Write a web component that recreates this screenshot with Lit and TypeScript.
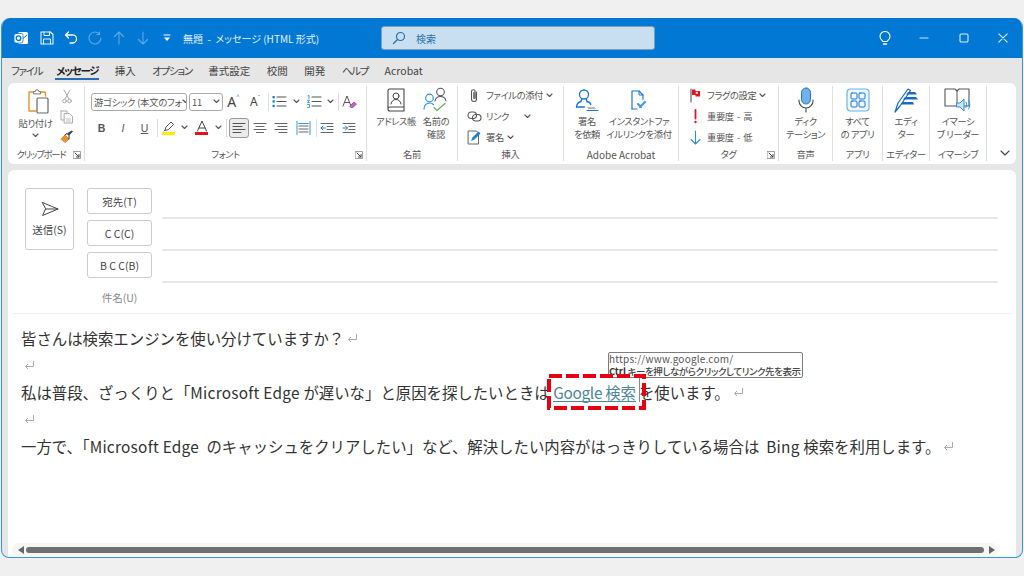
import { LitElement, html, css, svg } from "lit";
import { customElement } from "lit/decorators.js";

const S = (w: number, h: number, body: unknown, vb?: string) => html`<svg width=${w} height=${h} viewBox=${vb ?? `0 0 ${w} ${h}`} fill="none" stroke-linecap="round" stroke-linejoin="round">${body}</svg>`;
const chev = (c = "#555") => S(7, 5, svg`<path d="M1 1l2.5 2.5L6 1" stroke=${c} stroke-width="1.1"/>`);
const launcher = () => S(8, 8, svg`<path d="M.5 .5h7v7h-7z" stroke="#888" stroke-width=".8"/><path d="M2 2l4 4M6 3.5V6H3.5" stroke="#444" stroke-width="1"/>`);
const ret = () => html`<svg class="ret" width="11" height="11" viewBox="0 0 11 11" fill="none"><path d="M9.5 1v5.5H1.5M4 4L1.5 6.5 4 9" stroke="#aaa" stroke-width="1"/></svg>`;

const ic = {
  outlook: S(16, 16, svg`<rect x="5" y="2" width="10" height="12" rx="1.5" fill="#fff"/><path d="M7 5l3.5 3L14 5" stroke="#0078d4"/><rect x="1" y="3.5" width="9" height="9.5" rx="2" fill="#fff" stroke="#0078d4" stroke-width=".8"/><circle cx="5.5" cy="8.2" r="2.3" stroke="#0078d4" stroke-width="1.3"/>`),
  save: S(14, 14, svg`<path d="M1 1h9.5L13 3.5V13H1z" stroke="#e8f2fb" stroke-width="1.1"/><path d="M4 1v3.5h5.5V1M3.5 13V8h7v5" stroke="#e8f2fb"/>`),
  undo: S(14, 14, svg`<path d="M4.5 1L1.5 4l3 3M1.5 4h6.5a4 4 0 0 1 1 8H6" stroke="#fff" stroke-width="1.3"/>`),
  redo: S(14, 14, svg`<path d="M11.5 3A6 6 0 1 0 13 7M11.5 .8V3.5H8.8" stroke="#5fa8e2" stroke-width="1.1"/>`),
  up: S(12, 14, svg`<path d="M6 13V1M1.5 5.5L6 1l4.5 4.5" stroke="#5fa8e2" stroke-width="1.1"/>`),
  down: S(12, 14, svg`<path d="M6 1v12M1.5 8.5L6 13l4.5-4.5" stroke="#5fa8e2" stroke-width="1.1"/>`),
  qat: S(8, 8, svg`<path d="M1 1h6" stroke="#fff"/><path d="M1 3.5h6L4 7z" fill="#fff"/>`),
  search: S(14, 14, svg`<circle cx="8.5" cy="5.5" r="4" stroke="#2b6ea8" stroke-width="1.2"/><path d="M5.5 8.5L1.5 12.5" stroke="#2b6ea8" stroke-width="1.3"/>`),
  bulb: S(12, 15, svg`<path d="M4 10.5C2.5 9.3 1 8 1 5.5a5 5 0 0 1 10 0c0 2.5-1.5 3.8-3 5z" stroke="#fff" stroke-width="1.1"/><path d="M4.5 13h3" stroke="#fff" stroke-width="1.3"/>`),
  min: S(10, 10, svg`<path d="M1 5h8" stroke="#cfe4f7" stroke-width="1.2"/>`),
  max: S(10, 10, svg`<rect x="1" y="1" width="8" height="8" rx="1.3" stroke="#dcecf9" stroke-width="1.1"/>`),
  close: S(10, 10, svg`<path d="M.8 .8l8.4 8.4M9.2 .8L.8 9.2" stroke="#dcecf9" stroke-width="1.1"/>`),
  paste: S(24, 26, svg`<path d="M3.5 4h4M14 4h4.5a1 1 0 0 1 1 1v3M3 4v19h7" stroke="#e8922e" stroke-width="1.4"/><path d="M7.5 5.5V3.5h1.7a1.8 1.8 0 0 1 3.6 0h1.7v2z" stroke="#777" fill="#fff"/><rect x="11" y="10" width="11" height="15" rx="1" fill="#fff" stroke="#666" stroke-width="1.2"/>`),
  scissors: S(10, 15, svg`<path d="M2 1l5 9M8 1L3 10" stroke="#aaa"/><circle cx="2.5" cy="12" r="1.8" stroke="#aaa"/><circle cx="7.5" cy="12" r="1.8" stroke="#aaa"/>`),
  copy: S(14, 14, svg`<path d="M1 1h6v2M1 1v9h3" stroke="#aaa"/><path d="M4.5 3.5h5l3 3v6.5h-8z" stroke="#aaa"/><path d="M6.5 9h4M6.5 11h4" stroke="#bbb"/>`),
  painter: S(14, 13, svg`<path d="M1 9l4-4 4 4-3.5 3.5z" fill="#e8922e" stroke="#d47a1c" stroke-width=".7"/><path d="M7 3.5l2 2 4-4-1.5-1z" fill="#444"/><path d="M5 5l2-1.5 2 2L9 9" stroke="#333"/>`),
  bullets: S(15, 13, svg`<path d="M5 2h9M5 6.500h9M5 11h9" stroke="#555" stroke-width="1.1"/><rect x=".5" y="1" width="2.300" height="2.300" fill="#1d7fd1"/><rect x=".5" y="5.300" width="2.300" height="2.300" fill="#1d7fd1"/><rect x=".5" y="9.800" width="2.300" height="2.300" fill="#1d7fd1"/>`),
  numbered: S(15, 13, svg`<path d="M5 2h9M5 6.500h9M5 11h9" stroke="#555" stroke-width="1.1"/><path d="M1 .8l1-.3v3M.5 5.200h2l-2 2.500h2M.5 9.500h2v3h-2" stroke="#1d7fd1" stroke-width=".8"/>`),
  clear: S(15, 15, svg`<path d="M1 12L5 2l4 10M2.500 8.500h5" stroke="#555" stroke-width="1"/><path d="M8 12l4-4 2.500 2-3.500 3.500H9z" fill="#b768c9" stroke="#96309e" stroke-width=".7"/>`),
  hl: S(14, 15, svg`<path d="M3 10l1-3 5-5 2.500 2.500-5 5z" stroke="#555"/><path d="M3 10l-1 1" stroke="#555"/><rect y="12" width="13" height="3" fill="#ffef00"/>`),
  colorA: S(14, 15, svg`<path d="M2.500 11L7 1l4.500 10M4 8h6" stroke="#444" stroke-width="1"/><rect y="12" width="13" height="3" fill="#e8111c"/>`),
  left: S(14, 12, svg`<path d="M1 1.500h12M1 4.500h9M1 7.500h12M1 10.500h8" stroke="#555" stroke-width="1.1"/>`),
  center: S(14, 12, svg`<path d="M1 1.500h12M3 4.500h8M1 7.500h12M3.500 10.500h7" stroke="#666" stroke-width="1.1"/>`),
  right: S(14, 12, svg`<path d="M1 1.500h12M4 4.500h9M1 7.500h12M5 10.500h8" stroke="#666" stroke-width="1.1"/>`),
  justify: S(15, 14, svg`<path d="M3 5h9M3 8h9M3 11h9M3 2.500h9" stroke="#666" stroke-width="1.1"/><path d="M1 0v14M14 0v14" stroke="#69aee6" stroke-width="1.3"/><path d="M3 2.500h9" stroke="#3a90d8"/>`),
  outdent: S(14, 12, svg`<path d="M1 1.500h12M7 4.500h6M7 7.500h6M1 10.500h12" stroke="#666" stroke-width="1.1"/><path d="M5.500 6H1M3 4L1 6l2 2" stroke="#1d7fd1"/>`),
  indent: S(14, 12, svg`<path d="M1 1.500h12M7 4.500h6M7 7.500h6M1 10.500h12" stroke="#666" stroke-width="1.1"/><path d="M1 6h4.500M3.500 4l2 2-2 2" stroke="#1d7fd1"/>`),
  book: S(20, 24, svg`<path d="M2 21V2.500A1.500 1.500 0 0 1 3.500 1H18v22H4a2 2 0 0 1-2-2zm0 0a2 2 0 0 1 2-2h14" stroke="#444" stroke-width="1.1"/><circle cx="10" cy="8" r="3" stroke="#444"/><path d="M5 16c.5-3 2.500-4.500 5-4.500s4.500 1.500 5 4.500" stroke="#444"/>`),
  check: S(26, 26, svg`<circle cx="17.500" cy="5" r="3.800" stroke="#555" stroke-width="1.1"/><path d="M12 14c.5-2.500 2.500-4.500 5.500-4.500s5 2 5.500 4.500" stroke="#555" stroke-width="1.1"/><circle cx="6.500" cy="11" r="3.800" stroke="#2a8fe0" stroke-width="1.2"/><path d="M1 22c0-3.500 2.500-6 5.500-6 1.500 0 3 .5 4 1.500" stroke="#2a8fe0" stroke-width="1.2"/><path d="M11 20.500l3 3 8-7" stroke="#5cb85c" stroke-width="1.2"/>`),
  clip: S(10, 15, svg`<path d="M7.500 4v7a2.500 2.500 0 0 1-5 0V3.500a1.800 1.800 0 0 1 3.600 0V10a.7.7 0 0 1-1.300 0V4.500" stroke="#555" stroke-width="1.1"/>`),
  link: S(15, 11, svg`<rect x="1" y="1" width="8.500" height="6.500" rx="3.200" stroke="#555" stroke-width="1.100"/><rect x="5.500" y="3.500" width="8.500" height="6.500" rx="3.200" stroke="#555" stroke-width="1.100"/>`),
  sign: S(15, 15, svg`<path d="M1.500 1h8l2 2v11h-10z" stroke="#666" stroke-width="1"/><path d="M4 11l1.500-3.500 6-6 2 2-6 6z" fill="#1d7fd1"/>`),
  signreq: S(24, 24, svg`<circle cx="9" cy="6.500" r="4.500" stroke="#1a78d0" stroke-width="1.300"/><path d="M1.500 19c.3-3.500 2.500-5 4.500-5.500l.5-2M11.500 11.500l.5 2c2 .5 3.500 1.500 3.800 3" stroke="#1a78d0" stroke-width="1.300"/><path d="M1.500 19h8" stroke="#1a78d0" stroke-width="1.300"/><path d="M12 22.500h11" stroke="#1a78d0" stroke-width="1"/><path d="M13 19.500l1 1 1-1 1 1 1-1 1 1 1-1 1 1" stroke="#333" stroke-width=".8"/>`),
  instant: S(20, 22, svg`<path d="M3 20V2h7l4 4v3" stroke="#1a78d0" stroke-width="1.200"/><path d="M10 2v4h4" stroke="#1a78d0"/><path d="M3 20h5" stroke="#1a78d0" stroke-width="1.200"/><path d="M9 15l3 3M11 18l5-5" stroke="#3e9ae8" stroke-width="2.200"/><circle cx="14" cy="10" r=".8" fill="#1a78d0"/>`),
  flag: S(11, 15, svg`<path d="M1 1v13" stroke="#555" stroke-width="1.100"/><path d="M2 1.500h3.500v1.500H10v5.500H5.500V7H2z" fill="#e8111c"/><rect x="5.800" y="3.800" width="2" height="2" fill="#fff"/>`),
  bang: S(5, 15, svg`<path d="M2.500 1v8.500" stroke="#e8111c" stroke-width="1.800"/><circle cx="2.500" cy="13" r="1.200" fill="#e8111c"/>`),
  lowdown: S(11, 15, svg`<path d="M5.500 1v13M1 9.500L5.500 14 10 9.500" stroke="#2a8fe0" stroke-width="1.100"/>`),
  mic: S(16, 26, svg`<rect x="3.500" y="1" width="9" height="16" rx="4.500" fill="#74b0e8" stroke="#1a78d0" stroke-width="1"/><path d="M1 13v1a7 7 0 0 0 14 0v-1M8 21v4" stroke="#444" stroke-width="1.100"/>`),
  apps: S(24, 24, svg`<rect x="1" y="1" width="22" height="22" rx="3.500" fill="#eef7fd" stroke="#6cb4e8" stroke-width="1.200"/><rect x="5" y="5" width="6" height="6" rx="1" stroke="#1a78d0"/><rect x="13" y="5" width="6" height="6" rx="1" stroke="#1a78d0"/><rect x="5" y="13" width="6" height="6" rx="1" stroke="#1a78d0"/><rect x="13" y="13" width="6" height="6" rx="1" stroke="#1a78d0"/>`),
  editor: S(26, 26, svg`<path d="M2 25l3-9L15 2l2.500 1.500L7 19z" fill="#fff" stroke="#1a68c8" stroke-width="1.200"/><path d="M15 5h7l2 2.500h-11zM12 10h11l2 2.500H10zM9 15h11l1 2.500H8z" fill="#1a68c8"/>`),
  immersive: S(28, 26, svg`<path d="M1 2h10l2 2 2-2h10v17H1z" stroke="#555" stroke-width="1.100"/><path d="M13 4v15" stroke="#555"/><path d="M13 16h3l4-4v12l-4-4h-3z" fill="#cfe6f8" stroke="#2a8fe0"/><path d="M22 15c1 1.500 1 4 0 5.500M24.500 13.500c1.800 2.500 1.800 6 0 8.500" stroke="#2a8fe0"/>`),
  send: S(18, 16, svg`<path d="M1.500 1.500L17 8 1.500 14.500 4.500 8zM4.500 8H17" stroke="#444" stroke-width="1"/>`),
};

@customElement("app-root")
export class AppRoot extends LitElement {
  static styles = css`
    :host { display: block; position: relative; width: 1024px; height: 576px; overflow: hidden; background: #f0f0f0; box-sizing: border-box; padding: 18px 0 18px 0; color: #333;
      font-family: "Noto Sans CJK JP", "Noto Sans", sans-serif; font-feature-settings: "palt"; }
    svg { display: block; flex: none; }
    .win { height: 540px; margin: 0 1px; box-sizing: border-box; background: #e6e6e6; border: 1.5px solid #3a96dd; border-top: 0; border-radius: 9px 9px 8px 8px; display: flex; flex-direction: column; overflow: hidden; }
    .title { height: 40px; background: #0078d4; margin: 0 -1px; display: flex; align-items: center; flex: none; position: relative; color: #e4f0fa; }
    .qat { display: flex; align-items: center; margin-left: 12px; }
    .qat > * { flex: none; }
    .qat .c { width: 24px; display: flex; justify-content: center; }
    .qat .lg { width: 16px; margin-right: 6px; }
    .ttl { font-size: 10px; margin-left: 4px; width: 198px; white-space: pre; }
    .sbox { width: 274px; height: 24px; box-sizing: border-box; background: #c8dff2; border: 1px solid #7f9fb8; border-radius: 3px; display: flex; align-items: center; gap: 10px; padding-left: 10px; font-size: 10px; color: #2b6ea8; }
    .wbtns { margin-left: auto; display: flex; align-items: center; }
    .wbtns .c { width: 39.500px; display: flex; justify-content: center; }
    .tabs { height: 25px; flex: none; display: flex; align-items: center; gap: 16.500px; padding-left: 9px; font-size: 10.500px; color: #444; }
    .tab { position: relative; white-space: nowrap; }
    .tab:first-child { margin-right: -2.500px; }
    .tab.k { letter-spacing: -1.300px; }
    .tab.on { font-weight: 700; color: #222; }
    .tab.on::after { content: ""; position: absolute; left: -1px; right: -1px; bottom: -2px; height: 2px; background: #2a6db0; }
    .ribbon { height: 81px; flex: none; margin: 0 6px; background: #fff; border-radius: 6px; display: flex; font-size: 9.300px; letter-spacing: -.4px; color: #555; box-sizing: border-box; padding: 3px 0 3px; position: relative; }
    .g { display: flex; flex-direction: column; border-right: 1px solid #dedede; box-sizing: border-box; flex: none; position: relative; }
    .g .body { flex: 1; display: flex; min-height: 0; }
    .lab { height: 13px; line-height: 13px; font-size: 9.300px; text-align: center; color: #555; white-space: nowrap; flex: none; }
    .lab.en { font-size: 10px; letter-spacing: 0; }
    .lab.clipl { padding-right: 10px; letter-spacing: -1.200px; }
    .launch { position: absolute; right: 3px; bottom: 2px; }
    .big { display: flex; flex-direction: column; align-items: center; flex: 1; line-height: 13px; text-align: center; white-space: nowrap; padding-top: 1.500px; min-width: 0; }
    .big .i { height: 25px; display: flex; align-items: center; justify-content: center; margin-bottom: 2px; }
    .big.paste { flex: none; width: 45px; margin-left: 5px; padding-top: 2px; }
    .big.paste .i { height: 26px; padding-left: 4px; margin-bottom: 3px; }
    .big.paste .dn { margin-top: 3px; }
    .big.w40 { flex: none; width: 40px; }
    .big.w46 { flex: none; width: 46px; }
    .big.w58 { flex: none; width: 58px; }
    .pl9 { width: 9px; flex: none; }
    .cb { width: 18px; display: flex; flex-direction: column; align-items: center; gap: 6px; padding-top: 3px; }
    .rows3 { display: flex; flex-direction: column; margin-top: -1.500px; padding-left: 7px; flex: 1; }
    .r { height: 21px; display: flex; align-items: center; white-space: pre; flex: none; }
    .r .i { width: 18px; display: flex; justify-content: center; margin-right: 3px; }
    .r .ch { margin-left: 3px; }
    .r .ch.far { margin-left: 15px; }
    .fontwrap { flex: 1; display: flex; flex-direction: column; padding: 5.500px 0 0 6px; letter-spacing: 0; }
    .fr { display: flex; align-items: center; height: 22px; flex: none; }
    .fr.a1 { height: 20px; }
    .fr.a2 { margin-top: 5px; }
    .fr .c { display: flex; justify-content: center; align-items: center; flex: none; }
    .combo { height: 18px; box-sizing: border-box; border: 1px solid #aaa; border-radius: 3px; display: flex; align-items: center; justify-content: space-between; padding: 0 2px; font-size: 9.300px; letter-spacing: -.2px; color: #555; white-space: nowrap; overflow: hidden; flex: none; margin-right: 2px; }
    .combo.f { width: 96px; }
    .combo.s { width: 34px; }
    .vs { width: 1px; height: 18px; background: #ddd; flex: none; }
    .act { width: 20px; height: 20px; box-sizing: border-box; background: #ebebeb; border: 1px solid #9a9a9a; border-radius: 3px; display: flex; align-items: center; justify-content: center; flex: none; margin-left: 2px; }
    .bi { font-family: "Liberation Sans", sans-serif; font-size: 10.500px; color: #555; }
    .growA { font-family: "Noto Sans", sans-serif; color: #444; display: flex; align-items: flex-start; font-size: 14px; }
    .growA.sm { font-size: 12px; }
    .growA i { font-style: normal; font-size: 6px; color: #1d7fd1; line-height: 8px; }
    .expand { position: absolute; right: 6px; bottom: 8px; }
    .compose { flex: 1; min-height: 0; margin: 6px 6px 0; background: #fff; border-radius: 6px 6px 0 0; display: flex; flex-direction: column; }
    .head { display: flex; padding: 18px 18px 0 17px; height: 143px; box-sizing: border-box; flex: none; }
    .send { width: 49px; height: 62px; box-sizing: border-box; border: 1px solid #ccc; border-radius: 3px; display: flex; flex-direction: column; align-items: center; gap: 5px; padding-top: 12px; font-size: 10.500px; color: #444; margin-right: 13px; flex: none; }
    .hbtns { display: flex; flex-direction: column; gap: 6px; width: 65px; margin-right: 10px; flex: none; }
    .hb { height: 26px; flex: none; box-sizing: border-box; border: 1px solid #ccc; border-radius: 3px; display: flex; align-items: center; justify-content: center; font-size: 10.500px; color: #444; white-space: pre; }
    .sub { height: 26px; flex: none; display: flex; align-items: center; justify-content: center; font-size: 10.500px; color: #888; }
    .lines { flex: 1; display: flex; flex-direction: column; }
    .ln { height: 32px; box-sizing: border-box; border-bottom: 2px solid #e8e8e8; flex: none; }
    .ln:first-child { height: 31px; }
    .text { margin: 0 4px; border-top: 1px solid #f0f0f0; padding: 11px 0 0 9px; font-size: 15.400px; line-height: 27px; color: #333; font-feature-settings: normal; flex: 1; min-height: 0; }
    .text div { height: 27px; white-space: nowrap; display: flex; align-items: center; }
    .text span { white-space: pre; }
    .text .lat { letter-spacing: .25px; }
    .ret { margin-left: 3px; flex: none; }
    .ret.tight { margin-left: -5px; }
    .a { color: #4d8799; border-bottom: 1px solid #4d8799; line-height: 18px; letter-spacing: -.3px; }
    .sb { height: 13px; margin: 0 18px 1px 4px; background: #f6f6f6; border-radius: 6px; display: flex; align-items: center; flex: none; padding: 0 3px 0 3px; gap: 5px; }
    .thumb { flex: 1; height: 6px; background: #707070; border-radius: 3px; }
    .tri-l { width: 0; height: 0; border: 4px solid transparent; border-right: 6px solid #666; border-left: 0; margin-left: 3px; margin-right: -3px; }
    .tri-r { width: 0; height: 0; border: 4px solid transparent; border-left: 6px solid #666; border-right: 0; }
    .tip { position: absolute; left: 608px; top: 352px; width: 195px; height: 26px; box-sizing: border-box; border: 1px solid #7d7d7d; border-radius: 2px; background: #fff; line-height: 12px; color: #555; white-space: nowrap; overflow: hidden; }
    .tip .u { font-size: 10px; letter-spacing: .2px; display: block; }
    .tip .h { font-size: 9.500px; letter-spacing: -.45px; display: block; font-weight: 500; color: #444; }
    .tip b { color: #333; letter-spacing: 0; }
    .red { position: absolute; left: 547px; top: 374px; }
    .caret { position: absolute; left: 639px; top: 378px; width: 1px; height: 24px; background: #888; }
  `;

  big(icon: unknown, text: string, cls = "") {
    return html`<div class="big ${cls}"><div class="i">${icon}</div>${text.split("\n").map((t) => html`<div>${t}</div>`)}</div>`;
  }

  cell(w: number, c: unknown) {
    return html`<div class="c" style="width:${w}px">${c}</div>`;
  }

  group(w: number, body: unknown, label: string, launch = false, labCls = "") {
    return html`<div class="g" style="width:${w}px"><div class="body">${body}</div><div class="lab ${labCls}">${label}</div>${launch ? html`<div class="launch">${launcher()}</div>` : ""}</div>`;
  }

  render() {
    const c = this.cell;
    const kana = new Set(["ファイル", "メッセージ", "オプション", "ヘルプ"]);
    return html`
      <div class="win">
        <div class="title">
          <div class="qat">
            <div class="c lg">${ic.outlook}</div>
            <div class="c">${ic.save}</div>
            <div class="c">${ic.undo}</div>
            <div class="c">${ic.redo}</div>
            <div class="c">${ic.up}</div>
            <div class="c">${ic.down}</div>
            <div class="c">${ic.qat}</div>
            <div class="ttl">無題  -  メッセージ (HTML 形式)</div>
          </div>
          <div class="sbox">${ic.search}<span>検索</span></div>
          <div class="wbtns">
            <div class="c">${ic.bulb}</div><div class="c">${ic.min}</div><div class="c">${ic.max}</div><div class="c">${ic.close}</div>
          </div>
        </div>
        <div class="tabs">
          ${["ファイル", "メッセージ", "挿入", "オプション", "書式設定", "校閲", "開発", "ヘルプ", "Acrobat"].map((t, i) => html`<div class="tab ${i === 1 ? "on" : ""} ${kana.has(t) ? "k" : ""}">${t}</div>`)}
        </div>
        <div class="ribbon">
          ${this.group(77, html`
            <div class="big paste">
              <div class="i">${ic.paste}</div>
              <div>貼り付け</div>
              <div class="dn">${chev()}</div>
            </div>
            <div class="cb">${ic.scissors}${ic.copy}${ic.painter}</div>`, "クリップボード", true, "clipl")}
          ${this.group(282, html`
            <div class="fontwrap">
              <div class="fr a1">
                <div class="combo f">游ゴシック (本文のフォ${chev()}</div>
                <div class="combo s">11${chev()}</div>
                ${c(17, html`<span class="growA">A<i>^</i></span>`)}
                ${c(26, html`<span class="growA sm">A<i>ˇ</i></span>`)}
                <div class="vs"></div>
                ${c(20, ic.bullets)}${c(14, chev())}${c(22, ic.numbered)}${c(10, chev())}
                <div class="vs" style="margin-left:3px"></div>
                ${c(20, ic.clear)}
              </div>
              <div class="fr a2">
                ${c(21, html`<b class="bi">B</b>`)}${c(22, html`<i class="bi">I</i>`)}${c(21, html`<u class="bi">U</u>`)}
                <div class="vs" style="margin-left:2px"></div>
                ${c(21, ic.hl)}${c(10, chev())}${c(26, ic.colorA)}${c(7, chev())}
                <div class="vs" style="margin-left:4px"></div>
                <div class="act">${ic.left}</div>
                ${c(21, ic.center)}${c(22, ic.right)}${c(22, ic.justify)}
                <div class="vs" style="margin-left:2px"></div>
                ${c(20, ic.outdent)}${c(24, ic.indent)}
              </div>
            </div>`, "フォント", true)}
          ${this.group(91, html`<div class="pl9"></div>${this.big(ic.book, "アドレス帳", "w40")}${this.big(ic.check, "名前の\n確認", "w40")}`, "名前")}
          ${this.group(106, html`
            <div class="rows3">
              <div class="r"><div class="i">${ic.clip}</div>ファイルの添付<span class="ch">${chev()}</span></div>
              <div class="r"><div class="i">${ic.link}</div>リンク<span class="ch far">${chev()}</span></div>
              <div class="r"><div class="i">${ic.sign}</div>署名<span class="ch">${chev()}</span></div>
            </div>`, "挿入")}
          ${this.group(115, html`${this.big(ic.signreq, "署名\nを依頼", "w46")}${this.big(ic.instant, "インスタントファ\nイルリンクを添付", "w58")}`, "Adobe Acrobat", false, "en")}
          ${this.group(100, html`
            <div class="rows3">
              <div class="r"><div class="i">${ic.flag}</div>フラグの設定<span class="ch">${chev()}</span></div>
              <div class="r"><div class="i">${ic.bang}</div>重要度  -  高</div>
              <div class="r"><div class="i">${ic.lowdown}</div>重要度  -  低</div>
            </div>`, "タグ", true)}
          ${this.group(54, this.big(ic.mic, "ディク\nテーション"), "音声")}
          ${this.group(50, this.big(ic.apps, "すべて\nの アプリ"), "アプリ")}
          ${this.group(47, this.big(ic.editor, "エディ\nター"), "エディター")}
          ${this.group(57, this.big(ic.immersive, "イマーシ\nブ リーダー"), "イマーシブ")}
          <div class="expand">${S(10, 6, svg`<path d="M1 1l4 4 4-4" stroke="#444" stroke-width="1.100"/>`)}</div>
        </div>
        <div class="compose">
          <div class="head">
            <div class="send">${ic.send}<span>送信(S)</span></div>
            <div class="hbtns">
              <div class="hb">宛先(T)</div>
              <div class="hb">C C(C)</div>
              <div class="hb">B C C(B)</div>
              <div class="sub">件名(U)</div>
            </div>
            <div class="lines"><div class="ln"></div><div class="ln"></div><div class="ln"></div></div>
          </div>
          <div class="text">
            <div><span>皆さんは検索エンジンを使い分けていますか？</span>${ret()}</div>
            <div>${ret()}</div>
            <div><span>私は普段、ざっくりと「</span><span class="lat">Microsoft Edge </span><span>が遅いな」と原因を探したいときは </span><span class="a">Google 検索</span><span> を使います。</span>${ret()}</div>
            <div>${ret()}</div>
            <div><span>一方で、「</span><span class="lat">Microsoft Edge  </span><span>のキャッシュをクリアしたい」など、解決したい内容がはっきりしている場合は  </span><span class="lat">Bing </span><span>検索を利用します。</span>${ret()}</div>
          </div>
          <div class="sb"><div class="tri-l"></div><div class="thumb"></div><div class="tri-r"></div></div>
        </div>
      </div>
      <div class="caret"></div>
      <div class="tip"><span class="u">https://www.google.com/</span><span class="h"><b>Ctrl</b> キーを押しながらクリックしてリンク先を表示</span></div>
      <svg class="red" width="99" height="36" viewBox="0 0 99 36" fill="none"><rect x="2" y="2" width="95" height="32" stroke="#e60012" stroke-width="4" stroke-dasharray="13 4"/></svg>
    `;
  }
}
